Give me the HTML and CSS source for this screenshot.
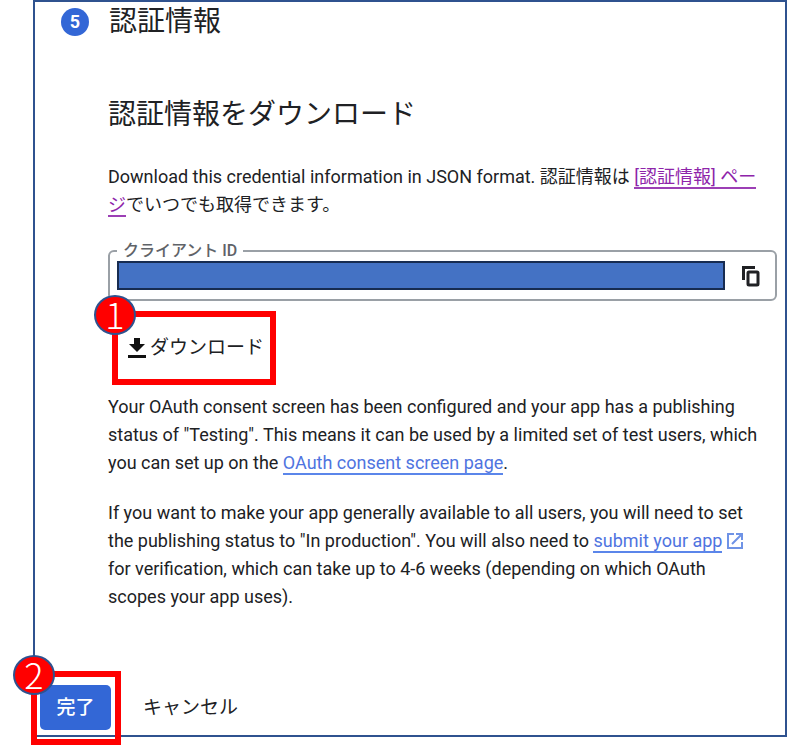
FILE: index.html
```html
<!DOCTYPE html>
<html lang="ja">
<head>
    <meta charset="UTF-8">
    <meta name="viewport" content="width=device-width, initial-scale=1.0">
    <title>認証情報</title>
    <link rel="stylesheet" href="styles.css">
</head>
<body>

<main class="panel">
    <!-- Step heading -->
    <header class="step">
        <span class="step-number">5</span>
        <h1>認証情報</h1>
    </header>

    <section class="content">
        <h2>認証情報をダウンロード</h2>

        <p>Download this credential information in JSON format. 認証情報は <a href="#credentials" class="visited">[認証情報] ページ</a>でいつでも取得できます。</p>

        <!-- Client ID -->
        <fieldset class="field">
            <legend><label for="clientId">クライアント ID</label></legend>
            <div class="field-row">
                <input type="text" id="clientId" class="client-id" readonly>
                <button type="button" class="copy" aria-label="コピー">
                    <svg width="20" height="22" viewBox="0 0 20 22" fill="none" stroke="#202124" stroke-width="3">
                        <path d="M2.500 15V2.500H14"/>
                        <rect x="7" y="7" width="10" height="13" rx="1"/>
                    </svg>
                </button>
            </div>
        </fieldset>

        <div class="mark mark-download">
            <span class="badge">1</span>
            <button type="button" class="download">
                <svg width="18" height="20" viewBox="0 0 18 20" fill="#111">
                    <path d="M6 0h6v6h5l-8 8-8-8h5zM0 17h18v3H0z"/>
                </svg>
                ダウンロード
            </button>
        </div>

        <p>Your OAuth consent screen has been configured and your app has a publishing status of "Testing". This means it can be used by a limited set of test users, which you can set up on the <a href="#consent">OAuth consent screen page</a>.</p>

        <p>If you want to make your app generally available to all users, you will need to set the publishing status to "In production". You will also need to <a href="#submit">submit your app</a>
            <svg class="external" width="16" height="16" viewBox="0 0 16 16" fill="none" stroke="#6f93e6" stroke-width="2">
                <path d="M7 1H1v14h14V9M9 1h6v6M15 1L5 11"/>
            </svg>
            for verification, which can take up to 4-6 weeks (depending on which OAuth scopes your app uses).</p>
    </section>

    <!-- Actions -->
    <footer class="actions">
        <div class="mark mark-done">
            <span class="badge">2</span>
            <button type="button" class="done">完了</button>
        </div>
        <button type="button" class="cancel">キャンセル</button>
    </footer>
</main>

</body>
</html>
```

FILE: styles.css
```css
* {
    margin: 0;
    padding: 0;
    box-sizing: border-box;
}
body {
    font-family: Roboto, "Noto Sans CJK JP", sans-serif;
    font-size: 18px;
    line-height: 28px;
    color: #202124;
    background-color: white;
    padding-bottom: 8px;
}
button {
    font-family: inherit;
    font-size: 19px;
    line-height: 28px;
    color: #202124;
    background: none;
    border: none;
    cursor: pointer;
}
.panel {
    margin: 0 1px 0 33px;
    border: 2px solid #2f528f;
}
.step {
    display: flex;
    align-items: center;
    gap: 20px;
    padding: 0 26px;
    height: 40px;
}
.step-number {
    width: 28px;
    height: 28px;
    border-radius: 50%;
    background-color: #3367d6;
    color: white;
    font-weight: bold;
    text-align: center;
}
h1, h2 {
    font-size: 28px;
    line-height: 40px;
    font-weight: normal;
}
.content {
    padding: 53px 8px 0 73px;
}
h2 {
    margin-bottom: 28px;
}
p {
    margin-bottom: 22px;
    padding-right: 16px;
}
a {
    color: #4f74e0;
    text-decoration: none;
    border-bottom: 2px solid #5b86ea;
}
.visited {
    color: #8e24aa;
    border-color: #9c3fb5;
}
.field {
    border: 2px solid #9aa0a6;
    border-radius: 6px;
    height: 60px;
    padding: 0 14px 0 7px;
}
legend {
    font-size: 16px;
    line-height: 20px;
    padding: 0 6px;
    font-weight: 500;
    color: #5f6368;
}
.field-row {
    display: flex;
    align-items: center;
    gap: 16px;
}
.client-id {
    flex: 1;
    min-width: 0;
    height: 29px;
    border: 2px solid #172c51;
    background-color: #4472c4;
    color: white;
}
.copy {
    display: flex;
}
.mark {
    position: relative;
    border: 6px solid #f00;
}
.mark-download {
    width: fit-content;
    margin: 10px 0 8px 4px;
    padding: 17px 6px 17px 10px;
}
.badge {
    position: absolute;
    top: -22px;
    left: -24px;
    width: 42px;
    height: 40px;
    border: 2px solid #2f528f;
    border-radius: 50%;
    background-color: #f00;
    color: white;
    font-family: "Noto Sans CJK JP", sans-serif;
    font-size: 36px;
    font-weight: 300;
    line-height: 32px;
    text-align: center;
}
.download {
    display: flex;
    align-items: center;
    gap: 4px;
}
.external {
    vertical-align: -2px;
}
.actions {
    display: flex;
    align-items: center;
    gap: 22px;
    margin: 60px 0 -10px -4px;
}
.mark-done {
    padding: 8px 4px 9px 3px;
}
.done {
    display: block;
    width: 71px;
    height: 45px;
    border-radius: 5px;
    background-color: #3367d6;
    color: white;
    font-weight: 500;
}
```
